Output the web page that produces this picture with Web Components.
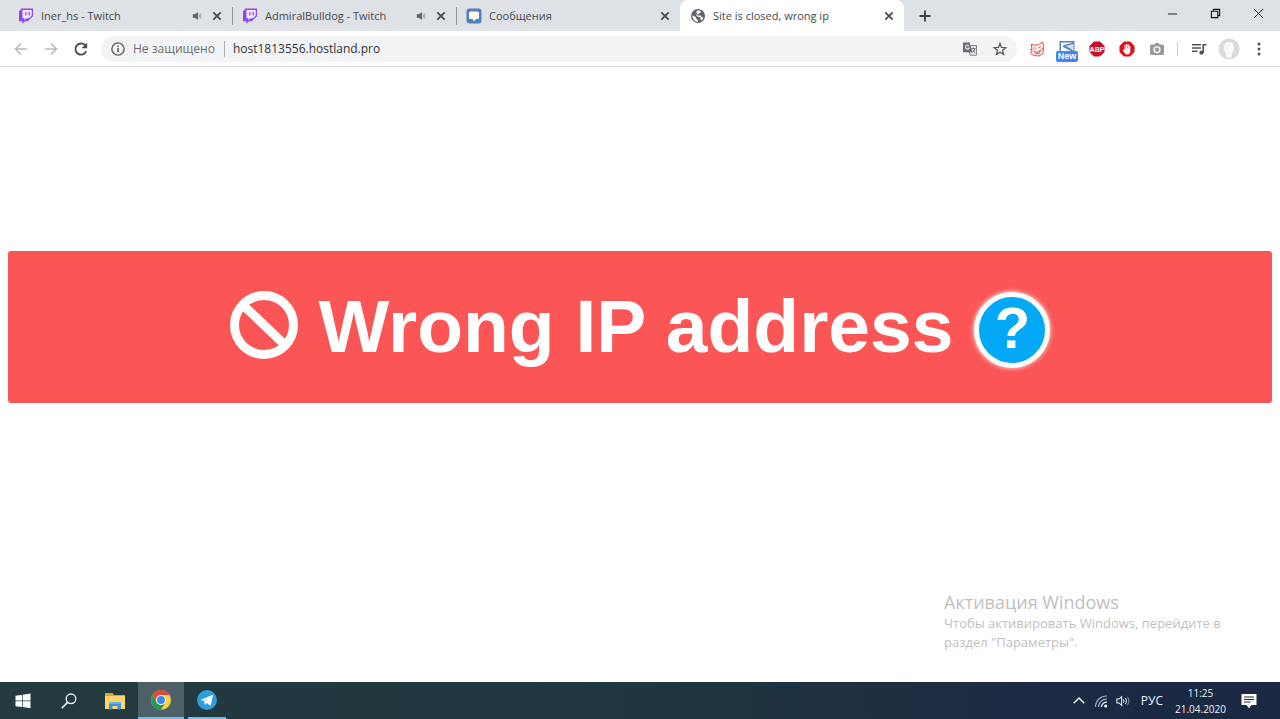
<!DOCTYPE html>
<html lang="ru">
<head>
<meta charset="utf-8">
<title>Site is closed, wrong ip</title>
<style>
html, body { margin: 0; height: 100%; }
body { font-family: "Open Sans", "Noto Sans", sans-serif; font-size: 12px; color: #45494d; background: #fff; }
</style>
</head>
<body>
<desktop-screen></desktop-screen>
<script>
const ICONS = {
  twitch: ['0 0 16 16', '<path fill="#8a45f5" d="M3.5.5 1 3.5v9.7h3.4v2.6L7 13.2h2.5L15 8.3V.5z"/><path fill="#f4efff" d="M4.5 1.9h9.2v5.7L11 10.2H8.6l-2.2 2.1v-2.1H4.5z"/><path fill="#8a45f5" d="M7.2 3.8h1.3v3.6H7.2zm3.3 0h1.3v3.6h-1.3z"/>'],
  message: ['0 0 16 16', '<rect x=".5" y=".5" width="15" height="15" rx="3" fill="#5181b8"/><path fill="#fff" d="M4.6 3.5h6.8q1.6 0 1.6 1.6v4.3q0 1.6-1.6 1.6H10l-2 2.300L6.500 11H4.6Q3 11 3 9.4V5.1q0-1.6 1.6-1.6z"/>'],
  globe: ['0 0 16 16', '<circle cx="8" cy="8" r="7" fill="#5f6368"/><path fill="#fff" d="M2.5 7.2l3.7 2v1.6l1.6 1v2.1C4.4 13.7 2 10.6 2.5 7.2zM8.6 2.3l1.8.4.4 1.7-1.6 1.2-1.8.6v1.4h3.4l.9 1.6h1.7c-.3 1.6-1.2 2.8-2.1 3.3l-.9-1.5.1-1.8-3.4-.6-.8-1.5.9-1.8-1.1-1.2c.6-1 1.4-1.5 2.5-1.8z"/>'],
  sound: ['0 0 12 12', '<path fill="#5a5e62" d="M1 4h2.6L7 1.2v9.6L3.6 8H1z"/><path fill="none" stroke="#8b8f93" stroke-width="1.1" d="M8.4 4q1 2 0 4M10 3q1.6 3 0 6"/>'],
  close: ['0 0 12 12', '<path fill="none" stroke="#45494d" stroke-width="1.7" d="M2.3 2.3l7.4 7.4m0-7.4L2.3 9.7"/>'],
  plus: ['0 0 16 16', '<path fill="none" stroke="#3c4043" stroke-width="1.8" d="M8 2.5v11M2.5 8h11"/>'],
  minimize: ['0 0 12 12', '<path stroke="#111" d="M1 6.5h10"/>'],
  restore: ['0 0 12 12', '<path fill="none" stroke="#111" stroke-width="1.2" d="M1.5 3.5h7v7h-7zM3.7 3V1.5h6.8v6.8H9"/>'],
  exit: ['0 0 12 12', '<path fill="none" stroke="#222" d="M1 1l10 10M11 1L1 11"/>'],
  back: ['0 0 16 16', '<path fill="none" stroke="#b7b9bc" stroke-width="1.6" d="M14 8H2.8M8 2.5L2.5 8 8 13.5"/>'],
  forward: ['0 0 16 16', '<path fill="none" stroke="#b7b9bc" stroke-width="1.6" d="M2 8h11.2M8 2.5L13.5 8 8 13.5"/>'],
  reload: ['0 0 16 16', '<path fill="none" stroke="#4a4e52" stroke-width="1.9" d="M13.2 10.2A5.6 5.6 0 1 1 12 4.1L13 5.2"/><path fill="#4a4e52" d="M14.2 1.6v5.7H8.5z"/>'],
  info: ['0 0 16 16', '<circle cx="8" cy="8" r="6.1" fill="none" stroke="#5f6368" stroke-width="1.4"/><path fill="#5f6368" d="M7.2 7h1.6v4.3H7.2zm0-2.5h1.6V6H7.2z"/>'],
  translate: ['0 0 16 16', '<path fill="#dfe1e4" stroke="#85898d" d="M6 4.5h8.5v9.8H8.2z"/><path fill="#676b6f" d="M1 1.5h6.7l2.6 9.8H1z"/><path fill="none" stroke="#e9ebed" stroke-width="1.1" d="M7 5A2 2 0 1 0 7.200 7H5.300"/><path fill="none" stroke="#777b7f" d="M9.500 7.500h4M11.500 6.500v1M13 7.500q-.5 2.500-2.800 4M10.500 9l2.700 2.500"/>'],
  star: ['0 0 16 16', '<path fill="none" stroke="#54585c" stroke-width="1.3" d="M8 2.500l1.500 3.900 4.200.3-3.200 2.700 1 4L8 11.200l-3.500 2.200 1-4-3.200-2.700 4.200-.3z"/>'],
  doodle: ['0 0 16 16', '<path fill="#fdeceb" stroke="#dc5450" d="M2.300 3l3 1.200 4.300-.5L13.500 1l1 3.600-.5 8-4 2.400-5.300-.5-3.200-2.300 1.500-3z"/><path fill="none" stroke="#dc5450" d="M4.700 6.500l2 1.300m3-.8l2-1.300M5 10q3.200 3 6.500-1l-1.300 3.500-3.400.2zM1 8.500h2M12.500 8h2.500"/>'],
  sheet: ['0 0 16 16', '<path fill="#5285b8" d="M.5 0h15v14H.5z"/><path fill="#fff" d="M2 1.500h12.500L5 4Q2.500 5 5 6.500L12 10H2z"/><path fill="#d3e5f3" d="M14.500 3v7Q12 7 6.500 5z"/>'],
  abp: ['0 0 16 16', '<path fill="#c70d2c" d="M4.900.500h6.200l4.400 4.400v6.200l-4.400 4.400H4.900L.5 11.100V4.900z"/><text x="8" y="10.600" text-anchor="middle" font-family="Liberation Sans,sans-serif" font-weight="700" font-size="7" fill="#fff">ABP</text>'],
  hand: ['0 0 16 16', '<path fill="#e1121a" d="M4.900.500h6.200l4.400 4.400v6.200l-4.400 4.400H4.900L.5 11.100V4.900z"/><path fill="#fff" d="M5.500 4.300q.6-.6 1.100 0v3h.4V3.200q.6-.7 1.200 0v4.100h.4V3.600q.6-.6 1.200 0v4h.4V5q.6-.6 1.100 0v5q0 3.500-3.100 3.500-1.900 0-2.800-1.700L3.800 9q.3-.9 1.100-.3l.6.600z"/>'],
  camera: ['0 0 16 16', '<path fill="#97999c" d="M2.500 3.500h2.700L6.500 2h3l1.300 1.500h2.700q1.500 0 1.500 1.500v7.500q0 1.500-1.500 1.500h-11Q1 14 1 12.500V5q0-1.500 1.500-1.500z"/><circle cx="8" cy="8.700" r="3.600" fill="#f1f1f1"/><circle cx="8" cy="8.700" r="2.100" fill="#97999c"/>'],
  playlist: ['0 0 16 16', '<path stroke="#505458" stroke-width="1.500" d="M1 3.700h9M1 7h9M1 10.300h5.500"/><path fill="none" stroke="#505458" stroke-width="1.600" d="M12.200 11.500V3.700h3.300"/><circle cx="10.500" cy="11.600" r="2.200" fill="#505458"/>'],
  avatar: ['0 0 22 22', '<circle cx="11" cy="11" r="10.500" fill="#d9dadb"/><path fill="#f8f8f8" d="M11 4q5.200 0 5.200 5.500 0 3.800-2.300 5.800v2.200q0 2.600-2.900 2.600t-2.900-2.600v-2.200q-2.300-2-2.300-5.800Q5.800 4 11 4z"/>'],
  dots: ['0 0 16 16', '<g fill="#505458"><circle cx="8" cy="3" r="1.500"/><circle cx="8" cy="8" r="1.500"/><circle cx="8" cy="13" r="1.500"/></g>'],
  ban: ['0 0 68 68', '<circle cx="34" cy="34" r="29.500" fill="none" stroke="#fff" stroke-width="9"/><path stroke="#fff" stroke-width="9" d="M14 15l40 38"/>'],
  windows: ['0 0 16 16', '<path fill="#fff" d="M.5 2.700L7 1.800v5.700H.500zM7.700 1.700L15.500.600v6.900H7.700zM.500 8.200H7v5.900l-6.500-.9zM7.700 8.200h7.800v7l-7.800-1.100z"/>'],
  search: ['0 0 16 16', '<circle cx="10" cy="5.800" r="4.800" fill="none" stroke="#eef2f3" stroke-width="1.400"/><path stroke="#eef2f3" stroke-width="1.600" d="M6.500 9.400L.800 15.200"/>'],
  folder: ['0 0 20 18', '<path fill="#dfa32b" d="M0 1h7.500l1.500 2H20v5H0z"/><path fill="#fbd56c" d="M0 4h20v13H0z"/><path fill="#3e93cf" d="M4 10h12v7.500h-3.500V14h-5v3.500H4z"/><path fill="#62b4e4" d="M4 10h12v2H4z"/>'],
  chrome: ['0 0 20 20', '<circle cx="10" cy="10" r="10" fill="#fcd03f"/><path fill="#de4b3c" d="M1.340 5A10 10 0 0 1 18.660 5H10a5 5 0 0 0-4.330 7.500z"/><path fill="#23995a" d="M1.340 5A10 10 0 0 0 10 20l4.330-7.500a5 5 0 0 1-8.660 0z"/><circle cx="10" cy="10" r="4.900" fill="#f4f7fb"/><circle cx="10" cy="10" r="3.900" fill="#4283ed"/>'],
  telegram: ['0 0 20 20', '<circle cx="10" cy="10" r="10" fill="#2d9fd8"/><path fill="#fff" d="M3.500 10L15.300 5q.8-.2.600.8l-2 9q-.3.900-1.100.4l-3-2.200-1.500 1.500q-.5.400-.6-.4l-.6-3z"/><path fill="#bcdff1" d="M7.200 11l5.800-3.800-4.500 4.800-.4 2.500z"/>'],
  chevron: ['0 0 12 12', '<path fill="none" stroke="#edf0f5" stroke-width="1.300" d="M1.500 8L6 3.500 10.500 8"/>'],
  wifi: ['0 0 14 14', '<path fill="none" stroke="#9fa9b9" stroke-width="1.200" d="M1.500 13A11 11 0 0 1 13 2M4.500 13A8 8 0 0 1 13 5.200"/><path fill="none" stroke="#e5e9ef" stroke-width="1.300" d="M7.300 13A5.400 5.400 0 0 1 13 8.100"/><circle cx="11.700" cy="12" r="1.500" fill="#fff"/>'],
  volume: ['0 0 16 14', '<path fill="none" stroke="#f0f2f6" stroke-width="1.200" d="M1 4.800h2.500L6.500 2v10l-3-2.800H1z"/><path fill="none" stroke="#e0e4ea" stroke-width="1.200" d="M8.500 5q1.400 2 0 4M10.700 3.500q2.500 3.500 0 7"/><path fill="none" stroke="#8d98aa" stroke-width="1.100" d="M13 2q3.500 5 0 10"/>'],
  note: ['0 0 16 16', '<path fill="#fff" d="M.500 1h15v11H10.500L8 15.300 5.500 12h-5z"/><path stroke="#1b2a43" stroke-width="1.100" d="M3 4h10M3 6.500h10M3 9h6.500"/>']
};

function define(name, render) {
  customElements.define(name, class extends HTMLElement {
    constructor() {
      super();
      this.attachShadow({ mode: 'open' });
    }
    connectedCallback() {
      const template = document.createElement('template');
      template.innerHTML = render(this);
      this.shadowRoot.replaceChildren(template.content.cloneNode(true));
    }
  });
}

const RESET = `
  *, :host { box-sizing: border-box; }
  button { appearance: none; border: 0; padding: 0; margin: 0; background: none; font: inherit; color: inherit; display: flex; align-items: center; justify-content: center; }`;

define('ui-icon', el => {
  const [box, art] = ICONS[el.getAttribute('name')];
  return `<style>
    :host { display: block; flex: none; width: var(--size, 16px); height: var(--size, 16px); }
    svg { display: block; width: 100%; height: 100%; }
  </style><svg viewBox="${box}" aria-hidden="true">${art}</svg>`;
});

define('icon-button', el => `<style>${RESET}
    :host { display: block; flex: none; width: 30px; }
    button { width: 100%; height: 100%; min-height: 24px; }
  </style><button type="button" aria-label="${el.getAttribute('label')}"><ui-icon name="${el.getAttribute('icon')}"></ui-icon></button>`);

define('browser-tab', el => `<style>${RESET}
    :host { display: flex; align-items: center; flex: 0 1 224px; min-width: 0; height: 31px; padding: 0 9px 0 10px; position: relative; }
    :host([divided])::after { content: ""; position: absolute; right: -1px; top: 7px; bottom: 6px; width: 1px; background: #96999d; }
    :host([active]) { background: #fff; border-radius: 8px 8px 0 0; }
    .title { flex: 1; min-width: 0; margin-left: 7px; font-size: 11px; line-height: 16px; white-space: nowrap; overflow: hidden; justify-content: flex-start; }
    .sound { --size: 10px; margin-right: 9px; }
    .close { --size: 12px; }
  </style>
  <ui-icon name="${el.getAttribute('icon')}"></ui-icon>
  <button type="button" class="title" role="tab" aria-selected="${el.hasAttribute('active')}"><slot></slot></button>
  ${el.hasAttribute('audible') ? '<button type="button" class="sound" aria-label="Звук"><ui-icon name="sound"></ui-icon></button>' : ''}
  <button type="button" class="close" aria-label="Закрыть"><ui-icon name="close"></ui-icon></button>`);

define('tab-strip', () => `<style>${RESET}
    :host { display: flex; height: 31px; background: #dee1e6; padding-left: 8px; }
    .tabs { display: flex; flex: 0 1 896px; min-width: 0; }
    .new { width: 42px; }
    .window { display: flex; margin-left: auto; height: 27px; --size: 11px; }
    .window icon-button { width: 43px; }
  </style>
  <div class="tabs" role="tablist">
    <browser-tab icon="twitch" audible divided>Iner_hs - Twitch</browser-tab>
    <browser-tab icon="twitch" audible divided>AdmiralBulldog - Twitch</browser-tab>
    <browser-tab icon="message">Сообщения</browser-tab>
    <browser-tab icon="globe" active>Site is closed, wrong ip</browser-tab>
  </div>
  <icon-button class="new" icon="plus" label="Новая вкладка"></icon-button>
  <div class="window">
    <icon-button icon="minimize" label="Свернуть"></icon-button>
    <icon-button icon="restore" label="Восстановить"></icon-button>
    <icon-button icon="exit" label="Закрыть окно"></icon-button>
  </div>`);

define('address-bar', () => `<style>${RESET}
    :host { display: flex; align-items: center; flex: 1; min-width: 0; height: 26px; border-radius: 13px; background: #f1f3f4; padding: 0 2px 0 9px; font-size: 12px; }
    .security { gap: 7px; color: #6b6f73; padding-right: 9px; border-right: 1px solid #aeb1b4; line-height: 14px; white-space: nowrap; }
    input { flex: 1; min-width: 0; border: 0; padding: 0 0 0 8px; margin: 0; background: none; font: inherit; color: #303337; outline: 0; line-height: 18px; }
  </style>
  <button type="button" class="security"><ui-icon name="info"></ui-icon>Не защищено</button>
  <input type="text" aria-label="Адрес" value="host1813556.hostland.pro">
  <icon-button icon="translate" label="Перевести"></icon-button>
  <icon-button icon="star" label="Добавить в закладки"></icon-button>`);

define('tool-bar', () => `<style>${RESET}
    :host { display: flex; align-items: center; height: 36px; padding: 0 6px; background: #fff; border-bottom: 1px solid #dcdddf; }
    address-bar { margin: 0 5px; }
    .badged { position: relative; }
    .badge { position: absolute; left: 4px; right: 4px; bottom: -1px; height: 11px; border-radius: 2px; background: #4382ef; color: #fff; font: 700 9px/11px "Liberation Sans", sans-serif; text-align: center; }
    hr { width: 1px; height: 14px; border: 0; margin: 0 6px 0 5px; background: #c9cbcd; }
    .avatar { --size: 22px; }
  </style>
  <icon-button icon="back" label="Назад"></icon-button>
  <icon-button icon="forward" label="Вперёд"></icon-button>
  <icon-button icon="reload" label="Обновить"></icon-button>
  <address-bar></address-bar>
  <icon-button icon="doodle" label="Расширение"></icon-button>
  <div class="badged"><icon-button icon="sheet" label="Расширение"></icon-button><span class="badge">New</span></div>
  <icon-button icon="abp" label="Adblock Plus"></icon-button>
  <icon-button icon="hand" label="AdBlock"></icon-button>
  <icon-button icon="camera" label="Снимок"></icon-button>
  <hr>
  <icon-button icon="playlist" label="Медиа"></icon-button>
  <icon-button class="avatar" icon="avatar" label="Профиль"></icon-button>
  <icon-button icon="dots" label="Меню"></icon-button>`);

define('error-banner', () => `<style>${RESET}
    :host { display: block; padding: 35px 16px; background: #fc5555; border-radius: 3px; }
    h1 { display: flex; align-items: center; justify-content: center; gap: 21px; margin: 0; color: #fff; font: 700 75px/78px "Liberation Sans", Arial, sans-serif; white-space: nowrap; }
    .text { margin-bottom: 2px; }
    ui-icon { --size: 68px; margin-bottom: 4px; }
    button { flex: none; width: 76px; height: 76px; margin-top: 6px; border: 5px solid #fff; border-radius: 50%; background: #03a9f4; color: #fff; font-size: 58px; line-height: 66px; padding-bottom: 4px; box-shadow: 0 0 5px #fff; }
  </style>
  <h1><ui-icon name="ban"></ui-icon><span class="text"><slot></slot></span><button type="button">?</button></h1>`);

define('activation-notice', () => `<style>
    :host { display: block; width: 300px; color: #bfbfbf; font-size: 13px; line-height: 19px; }
    h2 { margin: 0; font-size: 18px; line-height: 24px; font-weight: 400; }
    p { margin: 0; }
  </style>
  <h2>Активация Windows</h2>
  <p>Чтобы активировать Windows, перейдите в<br>раздел "Параметры".</p>`);

define('task-bar', () => `<style>${RESET}
    :host { display: flex; align-items: stretch; height: 37px; padding-right: 8px; background: linear-gradient(90deg, #233a41, #22373f 45%, #1b2b43 80%, #1a2842); color: #f0f3f6; }
    .app { width: 46px; }
    .large { --size: 20px; }
    .running { border-bottom: 2px solid #76b9ed; }
    .active { background: #4d6067; }
    .telegram { width: 38px; margin-left: 4px; }
    .tray { display: flex; align-items: center; margin-left: auto; }
    .tray icon-button { width: 22px; --size: 14px; }
    .lang { font-size: 12px; line-height: 16px; margin: 0 12px 0 7px; }
    .clock { display: block; font-size: 10px; line-height: 16px; text-align: center; }
    .clock span { display: block; }
    .tray .note { width: 46px; --size: 16px; }
  </style>
  <icon-button class="app" icon="windows" label="Пуск"></icon-button>
  <icon-button class="app" icon="search" label="Поиск"></icon-button>
  <icon-button class="app large" icon="folder" label="Проводник"></icon-button>
  <icon-button class="app large running active" icon="chrome" label="Chrome"></icon-button>
  <icon-button class="app large running telegram" icon="telegram" label="Telegram"></icon-button>
  <div class="tray">
    <icon-button icon="chevron" label="Скрытые значки"></icon-button>
    <icon-button icon="wifi" label="Сеть"></icon-button>
    <icon-button icon="volume" label="Громкость"></icon-button>
    <button type="button" class="lang">РУС</button>
    <button type="button" class="clock"><span>11:25</span><span>21.04.2020</span></button>
    <icon-button class="note" icon="note" label="Уведомления"></icon-button>
  </div>`);

define('desktop-screen', () => `<style>
    :host { display: flex; flex-direction: column; min-height: 100vh; }
    main { flex: 1; position: relative; padding: 184px 8px 0; }
    activation-notice { position: absolute; right: 36px; bottom: 30px; }
  </style>
  <tab-strip></tab-strip>
  <tool-bar></tool-bar>
  <main>
    <error-banner>Wrong IP address</error-banner>
    <activation-notice></activation-notice>
  </main>
  <task-bar></task-bar>`);
</script>
</body>
</html>
